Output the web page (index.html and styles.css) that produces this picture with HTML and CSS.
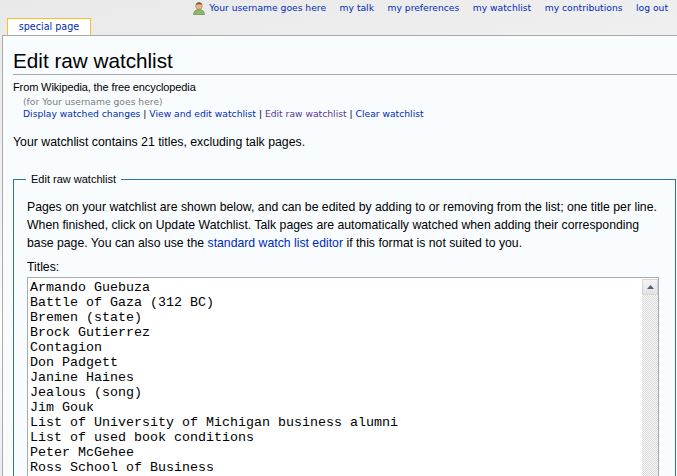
FILE: index.html
```html
<!DOCTYPE html>
<html>
<head>
<meta charset="utf-8">
<link rel="stylesheet" href="styles.css">
</head>
<body>
<div class="top">
  <div class="tabs"><a class="tab">special page</a></div>
  <ul class="personal">
    <li class="user"><svg class="uicon" width="14" height="14" viewBox="0 0 14 14"><path d="M1.5 13.5 Q2 8.5 7 8.5 Q12 8.5 12.5 13.5 Z" fill="#8db86a" stroke="#5c7f3c" stroke-width="0.6"/><circle cx="7" cy="5" r="3.3" fill="#e6b88a" stroke="#a7794f" stroke-width="0.6"/><path d="M3.8 4.2 Q4.5 1.3 7 1.3 Q9.6 1.3 10.2 4.2 Q8.5 3 7 3.4 Q5.3 3 3.8 4.2Z" fill="#7a5a3a"/></svg><a>Your username goes here</a></li>
    <li><a>my talk</a></li>
    <li><a>my preferences</a></li>
    <li><a>my watchlist</a></li>
    <li><a>my contributions</a></li>
    <li><a>log out</a></li>
  </ul>
</div>
<div class="content">
  <h1>Edit raw watchlist</h1>
  <div class="sitesub">From Wikipedia, the free encyclopedia</div>
  <div class="contentsub">
    <div class="for">(for Your username goes here)</div>
    <div class="tools"><a>Display watched changes</a> | <a>View and edit watchlist</a> | <a class="visited">Edit raw watchlist</a> | <a>Clear watchlist</a></div>
  </div>
  <p class="count">Your watchlist contains 21 titles, excluding talk pages.</p>
  <fieldset class="raw">
    <legend>Edit raw watchlist</legend>
    <p class="intro">Pages on your watchlist are shown below, and can be edited by adding to or removing from the list; one title per line. When finished, click on Update Watchlist. Talk pages are automatically watched when adding their corresponding base page. You can also use the <a>standard watch list editor</a> if this format is not suited to you.</p>
    <div class="label">Titles:</div>
    <div class="ta">
      <div class="ta-text">Armando Guebuza
Battle of Gaza (312 BC)
Bremen (state)
Brock Gutierrez
Contagion
Don Padgett
Janine Haines
Jealous (song)
Jim Gouk
List of University of Michigan business alumni
List of used book conditions
Peter McGehee
Ross School of Business
Ross Sea
Stephen M. Ross</div>
      <div class="sb">
        <div class="sb-btn"><svg width="7" height="4" viewBox="0 0 7 4"><path d="M0 4 L3.5 0 L7 4Z" fill="#4d6185"/></svg></div>
        <div class="sb-track"></div>
      </div>
    </div>
  </fieldset>
</div>
</body>
</html>
```

FILE: styles.css
```css
html, body {
  margin: 0;
  padding: 0;
  overflow: hidden;
}
body {
  background: linear-gradient(170deg, #e9e9e9 0%, #f3f3f3 40%, #ffffff 55%, #ececec 80%);
  font-family: "Liberation Sans", Arial, sans-serif;
  color: #000;
  height: 476px;
}
a {
  color: #002bb8;
  text-decoration: none;
}
.top {
  height: 35px;
  display: flex;
  justify-content: space-between;
  align-items: flex-start;
}
.tabs {
  align-self: flex-end;
  padding-left: 7px;
}
.tab {
  display: block;
  width: 84px;
  height: 17px;
  box-sizing: border-box;
  background: #fff;
  border: 1px solid #fabd23;
  border-bottom: none;
  text-align: center;
  font-family: "DejaVu Sans", Verdana, sans-serif;
  font-size: 9.6px;
  line-height: 16px;
}
.personal {
  list-style: none;
  margin: 0;
  padding: 1px 9px 0 0;
  display: flex;
  gap: 13.5px;
  font-family: "DejaVu Sans", Verdana, sans-serif;
  font-size: 9.2px;
  line-height: 14px;
}
.personal li {
  display: flex;
  align-items: center;
}
.uicon {
  margin-right: 3px;
}
.content {
  background: #f8fcff;
  border: 1px solid #aaa;
  border-bottom: none;
  margin: 0 -12px 0 2px;
  padding: 0 12px 0 10px;
  height: 440px;
  overflow: hidden;
}
h1 {
  margin: 0 -20px 0 0;
  padding: 12px 0 0 0;
  font-family: "Liberation Sans", Arial, sans-serif;
  font-weight: normal;
  font-size: 20.7px;
  line-height: 26px;
  border-bottom: 1px solid #aaa;
}
.sitesub {
  font-size: 11px;
  letter-spacing: -0.12px;
  line-height: 14px;
  margin-top: 5px;
}
.contentsub {
  padding-left: 10px;
  font-family: "DejaVu Sans", Verdana, sans-serif;
  font-size: 9.2px;
  line-height: 12px;
  margin-top: 2px;
}
.for {
  color: #7d7d7d;
}
.visited {
  color: #5a3696;
}
.count {
  margin: 14px 0 0 0;
  font-size: 12.3px;
  line-height: 17px;
}
.raw {
  margin: 21px 0 0 0;
  border: 1px solid #2f6fab;
  padding: 12px 16px 0 13px;
  min-width: 0;
}
.raw legend {
  font-size: 11px;
  padding: 0 5px;
  margin-left: -1px;
  line-height: 14px;
}
.intro {
  margin: 0 -6px 0 0;
  font-size: 12.25px;
  line-height: 18px;
}
.label {
  font-size: 12.25px;
  line-height: 18px;
  margin-top: 6px;
}
.ta {
  margin-top: 1px;
  display: flex;
  background: #fff;
  border: 1px solid #a5acb2;
  height: 220px;
}
.ta-text {
  flex: 1;
  white-space: pre;
  font-family: "Liberation Mono", "Courier New", monospace;
  font-size: 13.33px;
  line-height: 15px;
  padding: 2px 2px 0 2px;
  overflow: hidden;
}
.sb {
  width: 16px;
  margin: 1px 0 0 0;
  display: flex;
  flex-direction: column;
}
.sb-btn {
  height: 16px;
  box-sizing: border-box;
  border: 1px solid #d6d6d6;
  background: linear-gradient(#f4f4f4, #e2e2e2);
  display: flex;
  align-items: center;
  justify-content: center;
}
.sb-track {
  flex: 1;
  background-color: #f0f0f0;
  background-image: repeating-conic-gradient(#dcdcdc 0 25%, #f6f6f6 0 50%);
  background-size: 2px 2px;
}
```
